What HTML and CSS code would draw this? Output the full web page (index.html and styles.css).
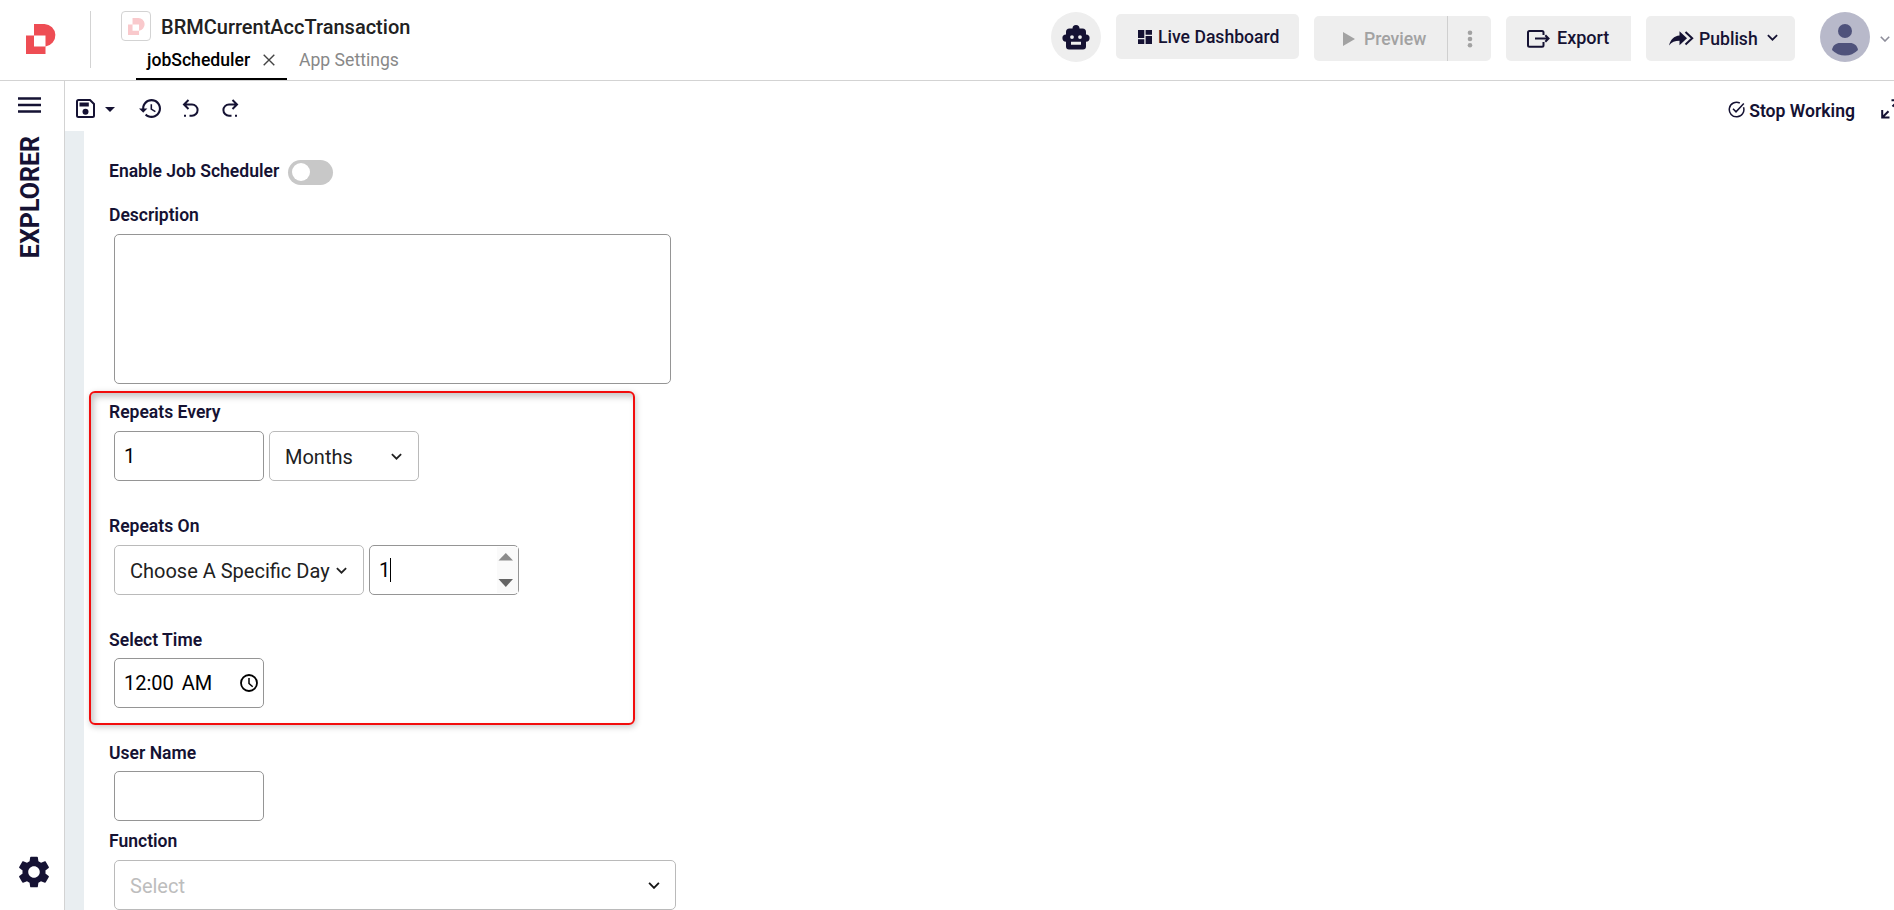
FILE: index.html
```html
<!DOCTYPE html>
<html lang="en">
<head>
<meta charset="utf-8">
<title>BRMCurrentAccTransaction</title>
<link rel="stylesheet" href="styles.css">
</head>
<body>
<svg class="defs" aria-hidden="true">
  <symbol id="logo" viewBox="0 0 30 30"><path fill-rule="evenodd" d="M8 0H18.500A11.300 11.300 0 0 1 19.500 22.500V30H0V11.500H8ZM8 11.500V22.500H19.500V11.500Z"/></symbol>
  <symbol id="chev" viewBox="0 0 10 6"><path d="M.8.8 5 5 9.200.8" fill="none" stroke="currentColor" stroke-width="1.600"/></symbol>
</svg>
<header class="header">
  <svg class="logo"><use href="#logo"/></svg>
  <div class="divider"></div>
  <div class="project">
    <div class="project-title"><span class="app-icon"><svg><use href="#logo"/></svg></span><h1>BRMCurrentAccTransaction</h1></div>
    <nav class="tabs">
      <div class="tab active"><span>jobScheduler</span><svg class="close" viewBox="0 0 12 12"><path d="M.7.700 11.300 11.300M11.300.700.700 11.300"/></svg></div>
      <div class="tab"><span>App Settings</span></div>
    </nav>
  </div>
  <div class="actions">
    <div class="bot"><svg viewBox="0 0 28 25"><path fill-rule="evenodd" d="M14 0a3.500 3.500 0 0 1 3.500 3.500H20.500a3.500 3.500 0 0 1 3.500 3.500V9.500a3.600 3.600 0 0 1 0 7.200V21.500a3 3 0 0 1-3 3H7a3 3 0 0 1-3-3V16.700a3.600 3.600 0 0 1 0-7.200V7a3.500 3.500 0 0 1 3.500-3.500H10.500a3.500 3.500 0 0 1 3.500-3.500ZM10 10.200a1.900 1.900 0 1 0 0 3.800 1.900 1.900 0 0 0 0-3.800ZM18 10.200a1.900 1.900 0 1 0 0 3.800 1.900 1.900 0 0 0 0-3.800ZM9 16.700V19.700H19V16.700Z"/></svg></div>
    <button class="btn live"><svg viewBox="0 0 14 14"><path d="M0 0h6.300v8H0zM7.600 0H14v4.700H7.600zM0 9.300h6.300V14H0zM7.600 6H14v8H7.600z"/></svg>Live Dashboard</button>
    <div class="preview"><button class="btn play"><svg viewBox="0 0 12 14"><path d="M0 0 12 7 0 14z"/></svg>Preview</button><button class="btn more"><svg viewBox="0 0 6 18"><circle cx="3" cy="2.700" r="2.300"/><circle cx="3" cy="9" r="2.300"/><circle cx="3" cy="15.300" r="2.300"/></svg></button></div>
    <button class="btn export"><svg viewBox="0 0 23 18"><path d="M16.500 5V2.500Q16.500 1 15 1H2.500Q1 1 1 2.500v12.700q0 1.500 1.500 1.500H15q1.500 0 1.500-1.500V12M8 8.500H21.500M18.300 5.300 21.500 8.500 18.300 11.700" fill="none" stroke="currentColor" stroke-width="2"/></svg>Export</button>
    <button class="btn publish"><svg class="share" viewBox="0 0 25 16"><path d="M0 14.500C1.500 8.500 5 5 10.500 4.500V.3L18 7.300 10.500 14.300V9.800C6 9.800 2.500 11 0 14.500Z"/><path d="M16.500 1 23.200 7.300 16.500 13.600" fill="none" stroke="currentColor" stroke-width="2"/></svg><span>Publish</span><svg class="chev"><use href="#chev"/></svg></button>
    <svg class="avatar" viewBox="0 0 50 50"><circle cx="25" cy="25" r="25" fill="#b8b9ca"/><circle cx="25" cy="19" r="7" fill="#4f527b"/><path d="M12 38C13 33 16 31 20 31H30C34 31 37 33 38 38Q32.500 43.500 25 43.500T12 38Z" fill="#4f527b"/></svg>
    <svg class="chev user-chev"><use href="#chev"/></svg>
  </div>
</header>
<div class="body">
  <aside class="sidebar">
    <svg class="menu" viewBox="0 0 23 16"><path d="M0 1.500H23M0 8H23M0 14.500H23" stroke="currentColor" stroke-width="2.400"/></svg>
    <div class="explorer">EXPLORER</div>
    <svg class="gear" viewBox="2 2 20 20"><path d="M19.140 12.940c.04-.3.060-.61.060-.94 0-.32-.02-.64-.07-.94l2.030-1.580c.18-.14.230-.41.120-.61l-1.920-3.320c-.12-.22-.37-.29-.59-.22l-2.390.96c-.5-.38-1.030-.7-1.620-.94L14.400 2.810c-.04-.24-.24-.41-.48-.41h-3.840c-.24 0-.43.170-.47.410L9.250 5.350C8.660 5.590 8.120 5.920 7.630 6.290L5.240 5.330c-.22-.08-.47 0-.59.220L2.740 8.870C2.620 9.080 2.660 9.340 2.860 9.480l2.030 1.580C4.840 11.360 4.800 11.690 4.800 12s.02.640.07.940l-2.030 1.580c-.18.140-.23.410-.12.610l1.920 3.320c.12.220.370.290.590.220l2.390-.96c.5.380 1.030.7 1.620.940l.36 2.540c.050.240.240.410.480.410h3.840c.24 0 .44-.17.470-.41l.36-2.540c.590-.24 1.130-.56 1.620-.94l2.390.96c.22.080.470 0 .590-.22l1.920-3.320c.12-.22.070-.47-.12-.61L19.140 12.940zM12 15.600c-1.980 0-3.600-1.620-3.600-3.600s1.620-3.600 3.600-3.600 3.600 1.620 3.600 3.600S13.980 15.600 12 15.600z"/></svg>
  </aside>
  <main class="main">
    <div class="toolbar">
      <svg class="save" viewBox="0 0 19 19"><path d="M1 2.500Q1 1 2.500 1H14L18 5V16.500Q18 18 16.500 18H2.500Q1 18 1 16.500Z" fill="none" stroke="currentColor" stroke-width="2"/><path d="M3.500 3.500H12.800V7.500H3.500Z"/><circle cx="9.500" cy="12.700" r="3"/></svg>
      <svg class="caret" viewBox="0 0 10 5"><path d="M0 0H10L5 5Z"/></svg>
      <svg class="history" viewBox="1 3 21 18"><path d="M13 3c-4.970 0-9 4.030-9 9H1l3.890 3.890.07.140L9 12H6c0-3.870 3.130-7 7-7s7 3.130 7 7-3.130 7-7 7c-1.930 0-3.680-.79-4.940-2.060l-1.420 1.420C8.270 19.990 10.510 21 13 21c4.970 0 9-4.030 9-9s-4.030-9-9-9zm-1 5v5l4.280 2.540.72-1.210-3.500-2.080V8H12z"/></svg>
      <svg class="undo" viewBox="0 0 16 19"><path d="M6 1 1.500 5.500 6 10M1.500 5.500H9.500A5.500 5.500 0 0 1 9.500 16.700H7" fill="none" stroke="currentColor" stroke-width="2"/><path d="M1.500 15.700h2v2h-2z"/></svg>
      <svg class="redo" viewBox="0 0 16 19"><path d="M10 1 14.500 5.500 10 10M14.500 5.500H6.500A5.500 5.500 0 0 0 6.500 16.700H9" fill="none" stroke="currentColor" stroke-width="2"/><path d="M12.500 15.700h2v2h-2z"/></svg>
      <div class="stop"><svg viewBox="0 0 17 17"><path d="M15.500 6.200A7.300 7.300 0 1 1 11.800 2M5 7.700 8 10.800 15.800 2.500" fill="none" stroke="currentColor" stroke-width="1.500"/></svg>Stop Working</div>
      <svg class="expand" viewBox="0 0 19 20"><path d="M1.200 11V18.500H8.500M1.200 18.500 7.500 12.200M11.500 7.500 17.800 1.200M10.500 1.200H17.800V8.500" fill="none" stroke="currentColor" stroke-width="2"/></svg>
    </div>
    <div class="content">
      <form class="form">
        <div class="row enable"><label>Enable Job Scheduler</label><span class="toggle"></span></div>
        <label class="l-desc">Description</label>
        <div class="field area"></div>
        <section class="highlight">
          <label>Repeats Every</label>
          <div class="row"><div class="field">1</div><div class="field select">Months<svg class="chev"><use href="#chev"/></svg></div></div>
          <label>Repeats On</label>
          <div class="row"><div class="field select day">Choose A Specific Day<svg class="chev"><use href="#chev"/></svg></div><div class="field number">1<i class="cursor"></i><svg class="spin" viewBox="0 0 21 46"><path d="M0 0H21V46H0Z" fill="#fafafa"/><path d="M1.500 13.500 8.800 6 16 13.500Z" fill="#8b8b8b"/><path d="M1.500 32H16L8.800 40Z" fill="#656565"/></svg></div></div>
          <label class="l-time">Select Time</label>
          <div class="field time">12:00 AM<svg viewBox="0 0 18 18"><circle cx="9" cy="9" r="8" fill="none" stroke="#000" stroke-width="1.800"/><path d="M9 4V9.500L12.700 12.800" fill="none" stroke="#000" stroke-width="1.500"/></svg></div>
        </section>
        <label class="l-user">User Name</label>
        <div class="field"></div>
        <label class="l-func">Function</label>
        <div class="field select func">Select<svg class="chev"><use href="#chev"/></svg></div>
      </form>
    </div>
  </main>
</div>
</body>
</html>
```
FILE: styles.css
```css
* { box-sizing: border-box; }
body { margin: 0; width: 1894px; height: 910px; overflow: hidden; background: #fff; color: #151233; font: 500 17.600px/22px Roboto, sans-serif; display: flex; flex-direction: column; }
svg { display: block; flex: none; fill: currentColor; }
.defs { position: absolute; width: 0; height: 0; }
.header { height: 81px; flex: none; border-bottom: 1px solid #d3d3d3; display: flex; padding-left: 26px; }
.logo { width: 30px; height: 30px; margin-top: 24px; color: #ee4d54; }
.divider { width: 1px; height: 57px; margin: 11px 30px 0 34px; background: #d3d3d3; }
.project { padding-top: 11px; }
.project-title { display: flex; height: 30px; gap: 10px; align-items: center; }
.app-icon { width: 30px; height: 30px; border: 1px solid #d3d3d3; border-radius: 4px; display: grid; place-items: center; color: #f9c9cc; }
.app-icon svg { width: 17px; height: 17px; }
h1 { margin: 0; font-size: 20px; line-height: 24px; font-weight: 500; color: #212121; padding-top: 2px; }
.tabs { display: flex; margin-left: 15px; }
.tab { height: 39px; padding: 8px 12px 0 12px; color: #888; font-weight: 400; display: flex; }
.tab.active { width: 151px; padding-left: 11px; color: #000; font-weight: 500; border-bottom: 2px solid #000; justify-content: space-between; }
.close { width: 12px; height: 12px; margin-top: 5px; stroke: #444; stroke-width: 1.400; fill: none; }
.actions { margin-left: auto; display: flex; align-items: flex-start; padding-right: 4px; }
.bot { width: 50px; height: 50px; border-radius: 50%; background: #eee; margin: 12px 15px 0 0; display: grid; place-items: center; }
.bot svg { width: 28px; height: 25px; }
.btn { border: 0; background: #eee; border-radius: 5px; height: 45px; margin: 16px 15px 0 0; padding: 0; color: inherit; font: 500 17.600px/22px Roboto, sans-serif; display: flex; align-items: center; }
.live { width: 183px; margin-top: 14px; padding-left: 22px; gap: 6px; }
.live svg { width: 14px; height: 14px; }
.preview { display: flex; color: #a2a2a2; }
.play { width: 133px; margin-right: 0; border-radius: 5px 0 0 5px; padding-left: 29px; gap: 9px; }
.play svg { width: 12px; height: 14px; }
.more { width: 44px; border-left: 1px solid #cfcfcf; border-radius: 0 5px 5px 0; justify-content: center; }
.more svg { width: 6px; height: 18px; }
.export { width: 125px; border-radius: 5px 0 0 5px; padding: 0 0 2px 21px; gap: 7px; font-size: 18px; }
.export svg { width: 23px; height: 18px; margin-top: 2px; }
.publish { width: 149px; padding-left: 23px; margin-right: 25px; }
.share { width: 25px; height: 16px; margin-right: 5px; }
.chev { width: 11px; height: 7px; }
.publish .chev { margin: -3px 0 0 9px; }
.avatar { width: 50px; height: 50px; margin-top: 12px; }
.header .user-chev { width: 10px; height: 6px; margin: 36px 0 0 10px; color: #8d8d9a; }
.body { flex: 1; min-height: 0; display: flex; }
.sidebar { width: 65px; border-right: 1px solid #d3d3d3; display: flex; flex-direction: column; padding: 16px 0 22px 18px; }
.menu { width: 23px; height: 16px; }
.explorer { writing-mode: vertical-rl; transform: rotate(180deg); font-size: 25px; line-height: 28px; font-weight: 700; width: 28px; margin: 23px 0 0 -1px; }
.gear { width: 32px; height: 32px; margin-top: auto; }
.main { flex: 1; min-width: 0; display: flex; flex-direction: column; overflow: hidden; }
.toolbar { height: 50px; flex: none; display: flex; padding: 18px 0 0 11px; }
.save { width: 19px; height: 19px; }
.caret { width: 10px; height: 5px; margin: 8px 0 0 10px; }
.history { width: 22px; height: 19px; margin-left: 24px; }
.undo { width: 17px; height: 19px; margin-left: 21px; }
.redo { width: 17px; height: 19px; margin-left: 23px; }
.stop { margin-left: auto; display: flex; gap: 5px; font-weight: 600; padding-top: 1px; margin-right: 26px; }
.stop svg { width: 17px; height: 17px; margin: 1px -1px 0 1px; }
.expand { width: 19px; height: 20px; margin-right: -6px; }
.content { flex: 1; min-height: 0; border-left: 19px solid #e9eef1; padding: 29px 0 0 5px; overflow: hidden; }
.form label { display: block; height: 22px; padding-left: 20px; font-size: 17.550px; line-height: 21px; font-weight: 600; }
.row { display: flex; gap: 5px; }
.enable { height: 25px; gap: 9px; }
.enable label { margin-top: 1px; }
.toggle { width: 45px; height: 25px; border-radius: 13px; background: #c8c8c8; padding: 3px 4px; }
.toggle::before { content: ""; display: block; width: 18px; height: 18px; border-radius: 50%; background: #fff; }
.form .l-desc { margin-top: 20px; }
.field { width: 150px; height: 50px; border: 1px solid #959595; border-radius: 5px; margin-left: 25px; font-size: 20px; line-height: 24px; font-weight: 400; color: #000; padding: 12px 9px; display: flex; }
.row .field + .field { margin-left: 0; }
.field.select { border-color: #bababa; color: #212121; padding: 13px 16px 0 15px; justify-content: space-between; }
.select .chev { margin-top: 8px; }
.field.area { width: 557px; height: 150px; margin-top: 7px; }
.highlight { width: 546px; height: 334px; margin: 7px 0 0; border: 2px solid #f20d0d; border-radius: 6px; box-shadow: 1px 2px 6px rgba(0,0,0,.22), inset 3px 4px 6px rgba(0,0,0,.22); padding-top: 9px; }
.highlight label { padding-left: 18px; margin: 0 0 7px; }
.highlight > label:not(:first-child) { margin-top: 35px; }
.highlight > label.l-time { margin-bottom: 6px; }
.highlight > .row > .field:first-child, .highlight > .field { margin-left: 23px; }
.highlight .day { width: 250px; }
.number { position: relative; }
.cursor { width: 1px; height: 24px; background: #000; }
.spin { position: absolute; right: 0; top: 1px; width: 21px; height: 46px; }
.time { justify-content: space-between; word-spacing: 3px; }
.highlight .time { padding-right: 5px; }
.time svg { width: 18px; height: 18px; margin-top: 3px; }
.form .l-user { margin: 18px 0 6px; }
.form .l-func { margin: 10px 0 7px; }
.field.func { width: 562px; color: #bdbdbd; padding-right: 15px; }
.func .chev { width: 12px; color: #151515; }
```
